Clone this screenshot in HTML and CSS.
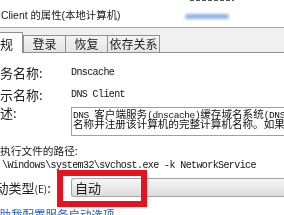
FILE: index.html
```html
<!DOCTYPE html>
<html lang="zh-CN">
<head>
<meta charset="utf-8">
<title>DNS Client 的属性</title>
<link rel="stylesheet" href="styles.css">
</head>
<body>
<div class="win">
  <div class="titlebar">
    <span class="frag"></span>
    <span class="title">Client 的属性(本地计算机)</span>
    <span class="blob"></span>
  </div>
  <div class="tabs">
    <div class="tab active">规</div>
    <div class="tab t1">登录</div>
    <div class="tab t2">恢复</div>
    <div class="tab t3">依存关系</div>
  </div>
  <div class="pane">
    <div class="row r-name">
      <span class="lbl">务名称:</span>
      <span class="val">Dnscache</span>
    </div>
    <div class="row r-disp">
      <span class="lbl">示名称:</span>
      <span class="val">DNS Client</span>
    </div>
    <div class="row r-desc">
      <span class="lbl lbl-desc">述:</span>
      <div class="desc"><div class="dl"><span class="a">DNS </span>客户端服务<span class="a">(dnscache)</span>缓存域名系统<span class="a">(DNS)</span></div><div class="dl">名称并注册该计算机的完整计算机名称。如果</div></div>
    </div>
    <div class="path-lbl">执行文件的路径:</div>
    <div class="path">\Windows\system32\svchost.exe -k NetworkService</div>
    <div class="row r-start">
      <span class="lbl lbl-start">启动类型<span class="e">(E)</span>:</span>
      <div class="select">自动</div>
      <div class="hilite"></div>
    </div>
    <div class="link">帮助我配置服务启动选项。</div>
  </div>
</div>
</body>
</html>
```
FILE: styles.css
```css
html, body {
  margin: 0;
  padding: 0;
  background: #ffffff;
}
.win {
  width: 284px;
  height: 215px;
  overflow: hidden;
  position: relative;
  font-family: "Noto Sans CJK SC", sans-serif;
  color: #1c1c1c;
  filter: blur(0.25px);
}
.titlebar {
  height: 27px;
  border-bottom: 1px solid #a7a7a7;
  display: flex;
  align-items: flex-start;
  background: #ffffff;
}
.title {
  font-family: "Liberation Sans", "Noto Sans CJK SC", sans-serif;
  font-size: 10.4px;
  line-height: 24px;
  padding-top: 4px;
  padding-left: 1px;
  white-space: nowrap;
  color: #1a1a1a;
}
.blob {
  width: 44px;
  height: 5px;
  margin-left: 64px;
  margin-top: 14px;
  background: #8db2e8;
  border-radius: 3px;
  filter: blur(1.5px);
}
.frag {
  position: absolute;
  left: 190px;
  top: 0;
  width: 44px;
  height: 1px;
  background: repeating-linear-gradient(90deg, #555 0 4px, transparent 4px 6px);
}
.tabs {
  height: 24px;
  background: #f0f0f0;
  border-bottom: 1px solid #8e9097;
  display: flex;
  align-items: flex-end;
}
.tab {
  box-sizing: border-box;
  height: 17px;
  border: 1px solid #8e9097;
  border-bottom: none;
  background: linear-gradient(#f4f4f4, #e4e4e4);
  font-size: 12px;
  line-height: 16px;
  text-align: center;
  white-space: nowrap;
}
.tab.active {
  width: 23px;
  height: 21px;
  margin-bottom: -1px;
  background: #ffffff;
  border-left: none;
  text-align: left;
  font-size: 13px;
  line-height: 22px;
  position: relative;
}
.t1 { width: 43px; }
.t2 { width: 43px; margin-left: -1px; }
.t3 { width: 53px; margin-left: -1px; }

.pane {
  padding-top: 10px;
  background: #ffffff;
}
.row {
  display: grid;
  grid-template-columns: 71px 1fr;
  position: relative;
}
.lbl {
  font-size: 13px;
  white-space: nowrap;
  overflow: hidden;
  color: #222;
}
.val {
  font-family: "Liberation Mono", monospace;
  font-size: 10px;
  letter-spacing: -0.6px;
  color: #111;
}
.r-name, .r-disp {
  height: 20px;
  line-height: 20px;
  margin-bottom: 2px;
}
.r-desc {
  height: 29px;
}
.lbl-desc {
  line-height: 12px;
}
.desc {
  box-sizing: border-box;
  height: 29px;
  border: 1px solid #a0a0a0;
  border-right: none;
  padding: 1px 0 0 1px;
  font-size: 10.6px;
  white-space: nowrap;
  overflow: hidden;
  color: #111;
}
.dl {
  height: 9.5px;
  line-height: 9.5px;
}
.desc .a {
  font-family: "Liberation Mono", monospace;
  font-size: 9.5px;
  letter-spacing: -0.4px;
}
.path-lbl {
  margin-top: 7px;
  height: 16px;
  line-height: 16px;
  font-size: 10.7px;
  white-space: nowrap;
  color: #222;
}
.path {
  height: 14px;
  line-height: 14px;
  padding-left: 2px;
  font-family: "Liberation Mono", monospace;
  font-size: 10px;
  letter-spacing: -0.6px;
  white-space: nowrap;
  color: #111;
}
.r-start {
  margin-top: 5px;
  height: 19px;
  line-height: 20px;
}
.lbl-start {
  text-indent: -17.5px;
}
.lbl-start .e {
  font-size: 10px;
}
.select {
  box-sizing: border-box;
  height: 19px;
  border: 1px solid #a4a4a4;
  border-right: none;
  border-radius: 3px 0 0 3px;
  background: linear-gradient(#f6f6f6, #e9e9e9 50%, #dcdcdc);
  font-size: 13px;
  line-height: 17px;
  padding-left: 3px;
}
.hilite {
  position: absolute;
  left: 57px;
  top: -8px;
  width: 90px;
  height: 37px;
  box-sizing: border-box;
  border: 6px solid #e3141f;
}
.link {
  margin-top: 10px;
  font-size: 11.5px;
  line-height: 14px;
  color: #2060c4;
  text-indent: -12px;
  white-space: nowrap;
}
```
